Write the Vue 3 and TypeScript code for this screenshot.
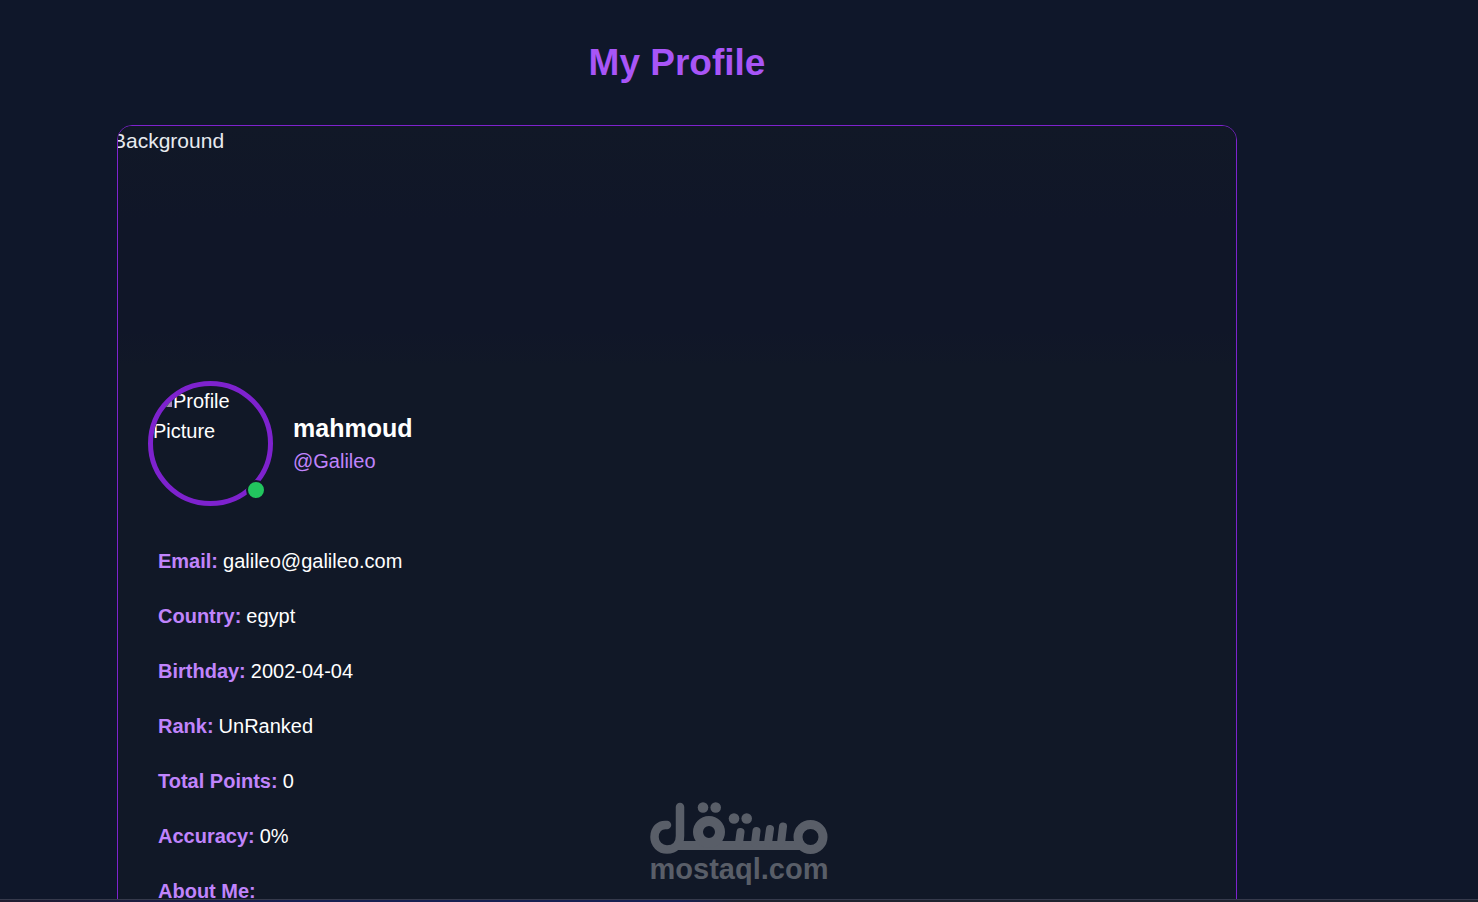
<script setup lang="ts">
interface Detail {
  label: string
  value: string
}

const details: Detail[] = [
  { label: 'Email', value: 'galileo@galileo.com' },
  { label: 'Country', value: 'egypt' },
  { label: 'Birthday', value: '2002-04-04' },
  { label: 'Rank', value: 'UnRanked' },
  { label: 'Total Points', value: '0' },
  { label: 'Accuracy', value: '0%' },
  { label: 'About Me', value: '' },
]
</script>

<template>
  <div class="page">
    <main class="content">
      <h1>My Profile</h1>
      <section class="card">
        <div class="cover"><span class="cover-alt">Background</span></div>
        <div class="identity">
          <div class="avatar-wrap">
            <div class="avatar">
              <svg class="broken" viewBox="0 0 20 20" aria-hidden="true">
                <path d="M1 2h12l5 5v12H1z" fill="#5d6470" />
                <path d="M3 19l6-7 3 3 5-4v8z" fill="#4f8d62" />
                <path d="M14 19l5-8v8z" fill="#a78bba" />
              </svg>Profile Picture
            </div>
            <span class="status"></span>
          </div>
          <div>
            <h2>mahmoud</h2>
            <p class="handle">@Galileo</p>
          </div>
        </div>
        <dl class="details">
          <div v-for="item in details" :key="item.label" class="detail">
            <dt>{{ item.label }}:</dt>
            <dd>{{ item.value }}</dd>
          </div>
        </dl>
      </section>
    </main>
    <div class="brand">
      <svg viewBox="0 0 180 54" role="img" aria-label="مستقل">
        <g fill="none" stroke="#595e68" stroke-width="8" stroke-linecap="round">
          <path d="M18 25C10 24 5.500 30 5.500 37C5.500 44 11 49.500 18 49.500C26 49.500 31 44 31 36V7" stroke-width="8.500" />
          <path d="M27 45.500H152" stroke-width="9" stroke-linecap="butt" />
          <circle cx="60" cy="32" r="11" stroke-width="10" />
          <path d="M90 43L91.500 32M106 43L107.500 31M119 43L121 29M132 43L134 26.500" />
          <circle cx="161.500" cy="37" r="12.500" stroke-width="9" />
        </g>
        <g fill="#595e68">
          <circle cx="54" cy="7.500" r="5.300" /><circle cx="66.700" cy="7.500" r="5.300" />
          <circle cx="85" cy="18.500" r="5.300" /><circle cx="97.700" cy="18.500" r="5.300" />
        </g>
      </svg>
      <span>mostaql.com</span>
    </div>
    <div class="bottom-edge"></div>
  </div>
</template>

<style>
body {
  margin: 0;
  background: #0f172a;
}
</style>

<style scoped>
.page {
  position: relative;
  height: 100vh;
  overflow: hidden;
  background: #0f172a;
  color: #fff;
  font: 20px/30px "Liberation Sans", Arial, sans-serif;
}
.content {
  max-width: 1120px;
  margin: 0 241px 0 117px;
  padding-top: 40px;
}
h1 {
  margin: 0 0 40px;
  color: #a855f7;
  font-size: 37px;
  line-height: 45px;
  text-align: center;
}
.card {
  box-sizing: border-box;
  overflow: hidden;
  border: 1px solid #7e22ce;
  border-radius: 15px;
  background: #111827;
}
.cover {
  height: 240px;
  overflow: hidden;
  background: linear-gradient(#111827, #101628 40%, #101628 85%, #111827);
  color: #e8ebf0;
  font-size: 21px;
}
.cover-alt {
  display: block;
  margin-left: -6px;
}
.identity {
  display: flex;
  align-items: center;
  gap: 20px;
  margin: 15px 30px 0;
}
.avatar-wrap {
  position: relative;
}
.avatar {
  box-sizing: border-box;
  width: 125px;
  height: 125px;
  overflow: hidden;
  border: 5px solid #7e22ce;
  border-radius: 50%;
}
.broken {
  width: 20px;
  height: 20px;
  vertical-align: baseline;
}
.status {
  position: absolute;
  right: 7px;
  bottom: 6px;
  width: 16px;
  height: 16px;
  border: 2px solid #111827;
  border-radius: 50%;
  background: #22c55e;
}
h2 {
  margin: 0;
  font-size: 25px;
  line-height: 35px;
}
.handle {
  margin: 0;
  color: #c084fc;
}
.details {
  display: grid;
  gap: 25px;
  margin: 0;
  padding: 40px;
}
.detail {
  display: flex;
  gap: 5px;
}
dt {
  color: #c084fc;
  font-weight: 700;
}
dd {
  margin: 0;
}
.brand {
  position: absolute;
  left: 50%;
  bottom: 18px;
  display: flex;
  flex-direction: column;
  align-items: center;
  width: 180px;
  margin-left: -90px;
  color: #595e68;
  font-size: 29px;
  font-weight: 700;
}
.brand svg {
  width: 180px;
  height: 54px;
}
.bottom-edge {
  position: absolute;
  right: 0;
  bottom: 0;
  left: 0;
  height: 2px;
  border-top: 1px solid #363a4c;
  background: linear-gradient(90deg, #201c30, #172052 20%, #172052 46%, #1f2430 50%);
}
</style>
